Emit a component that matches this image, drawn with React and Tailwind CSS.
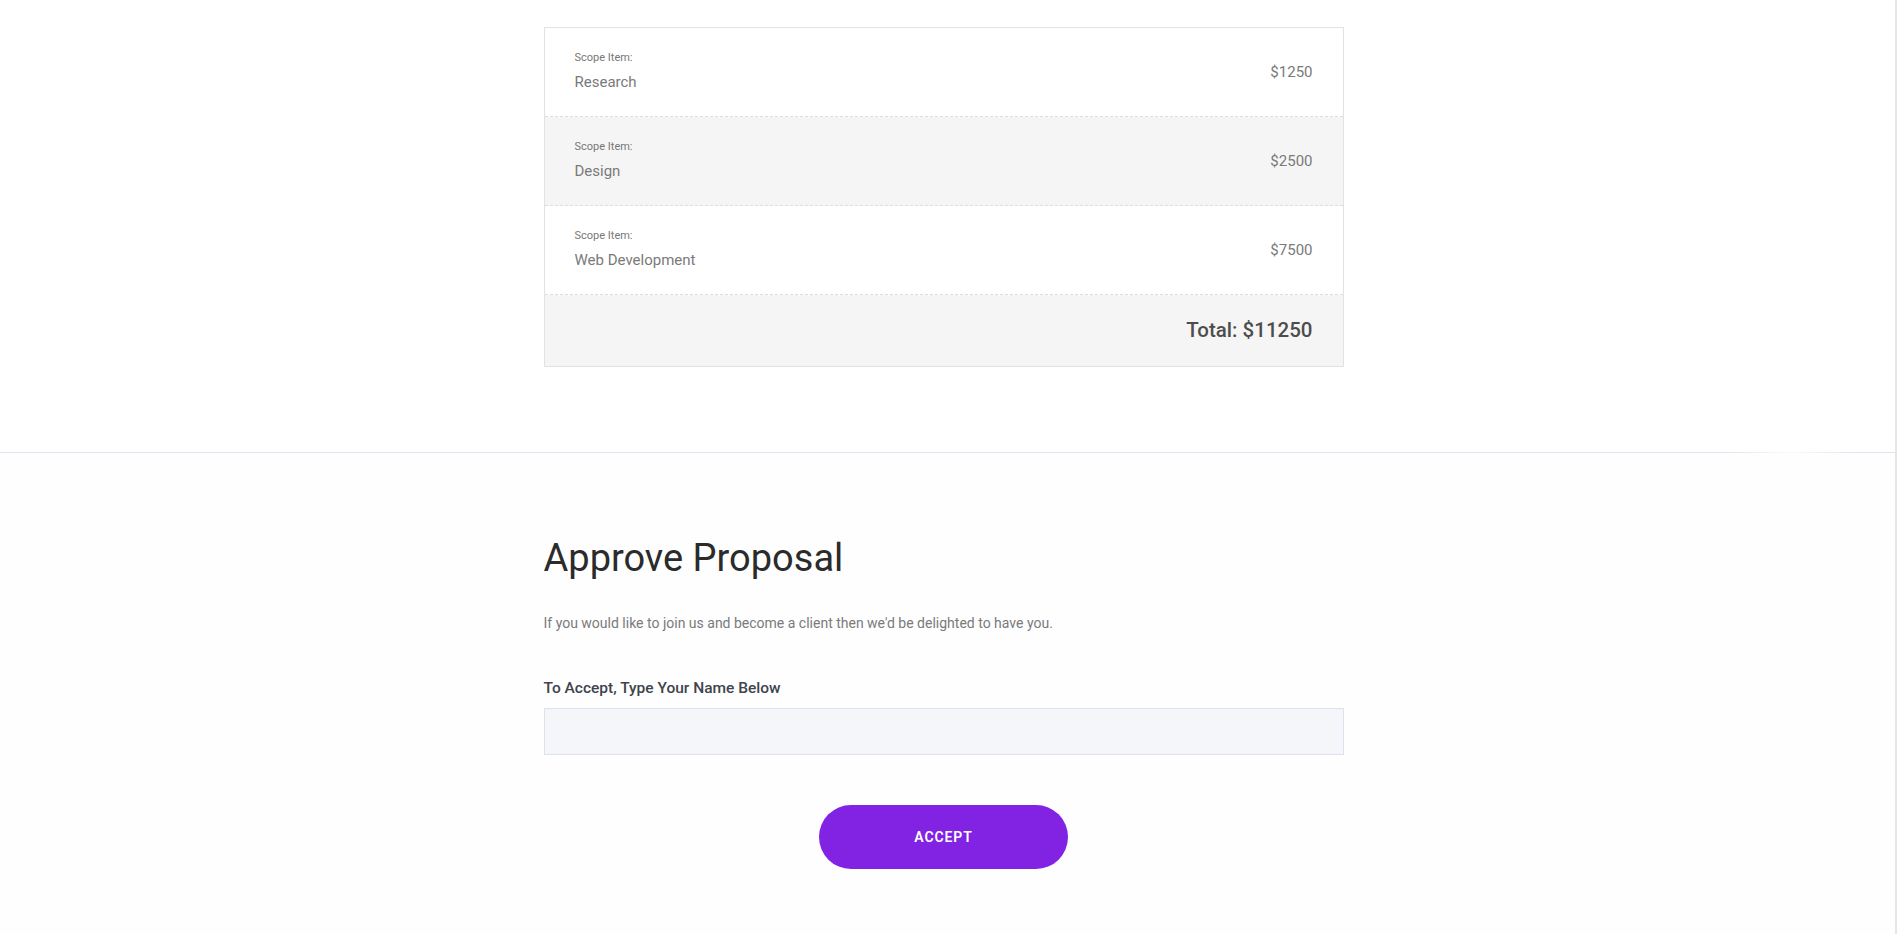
import React from "react";

const items = [
  { name: "Research", price: "$1250", bg: "bg-white" },
  { name: "Design", price: "$2500", bg: "bg-[#f5f5f5]" },
  { name: "Web Development", price: "$7500", bg: "bg-white" },
];

export default function App() {
  return (
    <div
      className="min-h-screen w-full bg-white border-r-2 border-[#e6e6e6]"
      style={{ fontFamily: "Roboto, 'Liberation Sans', sans-serif" }}
    >
      <section className="pt-[27px] pb-[85px] pr-[8px]">
        <div className="mx-auto w-[800px] border border-[#e2e2e2]">
          {items.map((it) => (
            <div
              key={it.name}
              className={`flex h-[89px] items-center justify-between border-b border-dashed border-[#dedede] px-[30px] ${it.bg}`}
            >
              <div className="flex flex-col -mt-[2px]">
                <span className="text-[11px] leading-[16px] text-[#777777]">Scope Item:</span>
                <span className="mt-[6px] text-[15px] leading-[20px] text-[#7a7a7a]">{it.name}</span>
              </div>
              <span className="text-[15px] leading-[20px] text-[#7a7a7a]">{it.price}</span>
            </div>
          ))}
          <div className="flex h-[71px] items-center justify-end bg-[#f5f5f5] px-[30px]">
            <span className="-mt-[2px] text-[20.5px] font-medium leading-[26px] text-[#4d4d4d]">Total: $11250</span>
          </div>
        </div>
      </section>

      <div className="h-px w-full bg-[linear-gradient(to_right,#dde3f1_0%,#dde3f1_91%,#fbfbfd_94.5%,#dde3f1_98%,#dde3f1_100%)]" />

      <section className="bg-[#fefeff] pt-[82px] pb-[65px] pr-[8px]">
        <div className="mx-auto flex w-[800px] flex-col">
          <h2 className="text-[38px] font-normal leading-[46px] text-[#2b2b2b]">
            Approve Proposal
          </h2>
          <p className="mt-[32px] text-[14px] leading-[20px] text-[#7a7a7a]">
            If you would like to join us and become a client then we'd be delighted to have you.
          </p>
          <label className="mt-[44px] text-[15.5px] font-medium leading-[22px] text-[#40444c]">
            To Accept, Type Your Name Below
          </label>
          <input
            type="text"
            className="mt-[9px] h-[47px] w-full border border-[#dce3ef] bg-[#f5f6fa] px-3 outline-none"
          />
          <div className="mt-[50px] flex justify-center">
            <button className="h-[64px] w-[249px] rounded-full bg-[#8223e3] text-[14px] font-semibold tracking-[0.9px] text-white">
              ACCEPT
            </button>
          </div>
        </div>
      </section>
    </div>
  );
}
